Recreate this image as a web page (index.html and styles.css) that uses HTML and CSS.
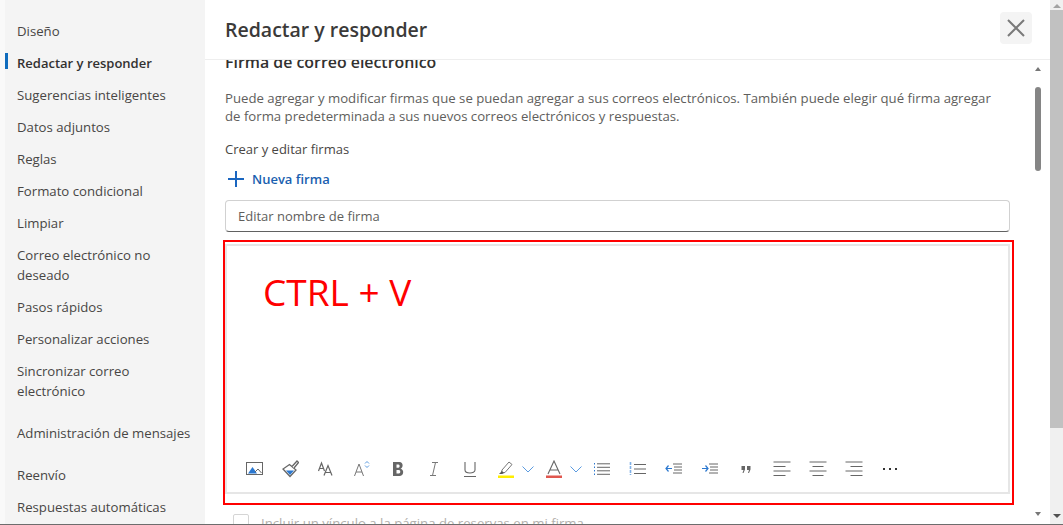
FILE: index.html
```html
<!DOCTYPE html>
<html lang="es">
<head>
<meta charset="utf-8">
<title>Redactar y responder</title>
<link rel="stylesheet" href="styles.css">
</head>
<body>
<div class="app">
  <nav class="side">
    <a class="item">Diseño</a>
    <a class="item active">Redactar y responder</a>
    <a class="item">Sugerencias inteligentes</a>
    <a class="item">Datos adjuntos</a>
    <a class="item">Reglas</a>
    <a class="item">Formato condicional</a>
    <a class="item">Limpiar</a>
    <a class="item">Correo electrónico no deseado</a>
    <a class="item">Pasos rápidos</a>
    <a class="item">Personalizar acciones</a>
    <a class="item">Sincronizar correo electrónico</a>
    <a class="item spaced">Administración de mensajes</a>
    <a class="item spaced">Reenvío</a>
    <a class="item">Respuestas automáticas</a>
  </nav>
  <main class="main">
    <header class="head">
      <h1 class="title">Redactar y responder</h1>
      <button class="close" aria-label="Cerrar">
        <svg width="18" height="18" viewBox="0 0 18 18"><path d="M1 1L17 17M17 1L1 17" stroke="#7a7a7a" stroke-width="2" fill="none"/></svg>
      </button>
    </header>
    <div class="body">
      <div class="content">
        <h2 class="section">Firma de correo electrónico</h2>
        <p class="desc">Puede agregar y modificar firmas que se puedan agregar a sus correos electrónicos. También puede elegir qué firma agregar de forma predeterminada a sus nuevos correos electrónicos y respuestas.</p>
        <p class="label">Crear y editar firmas</p>
        <div class="new">
          <svg width="18" height="18" viewBox="0 0 18 18"><path d="M9 1V17M1 9H17" stroke="#1a66c0" stroke-width="2" fill="none"/></svg>
          <span>Nueva firma</span>
        </div>
        <div class="name">Editar nombre de firma</div>
        <div class="redbox">
          <div class="editor">
            <div class="typed">CTRL + V</div>
            <div class="toolbar">
              <svg class="ic" viewBox="0 0 18 18"><rect x="1.500" y="2.500" width="16" height="12" fill="#fff" stroke="#666"/><path d="M3 13.500L7.500 7L12 13.500Z" fill="#2b78d0"/><path d="M10 12L13 9L16.500 13" fill="none" stroke="#666"/></svg>
              <svg class="ic" viewBox="0 0 18 18"><path d="M2 9L9 16.500L15 10L8.500 4.500Z" fill="#fff" stroke="#666" stroke-width="1.300"/><path d="M5 10.500L13 10.500L9 15Z" fill="#2b78d0"/><path d="M11 6.500L16 1L17.500 2.500L13 8" fill="#fff" stroke="#666" stroke-width="1.300"/></svg>
              <svg class="ic" viewBox="0 0 18 18"><path d="M1.500 11L4.500 3L7.500 11M2.500 8.500H6.500M7 15.500L11 5.500L15 15.500M8.200 12.500H13.800" fill="none" stroke="#666" stroke-width="1.200"/></svg>
              <svg class="ic" viewBox="0 0 18 18"><path d="M1.500 16L6 4L10.500 16M3 12H9" fill="none" stroke="#777" stroke-width="1"/><path d="M12 3.500L14 1.500L16 3.500M12 5.500L14 7.500L16 5.500" fill="none" stroke="#5b9be0" stroke-width="1"/></svg>
              <svg class="ic" viewBox="0 0 18 18"><path d="M4 2H10.500C14.500 2 14.500 8 11.500 8.700C15.500 9.300 15 16 10.500 16H4ZM7.500 4.500V7.700H9.500C11 7.700 11 4.500 9.500 4.500ZM7.500 10V13.500H10C11.700 13.500 11.700 10 10 10Z" fill="#666" fill-rule="evenodd"/></svg>
              <svg class="ic" viewBox="0 0 18 18"><path d="M7 2.500H13M5 15.500H11M10.500 2.500L7.500 15.500" fill="none" stroke="#777" stroke-width="1"/></svg>
              <svg class="ic" viewBox="0 0 18 18"><path d="M4 2V10C4 14 14 14 14 10V2M3 16.500H15" fill="none" stroke="#666" stroke-width="1.100"/></svg>
              <span class="pair">
                <svg class="ic" viewBox="0 0 18 18"><path d="M5 10L12 2L15 4.500L8 12.500L4.500 13Z" fill="#fff" stroke="#777"/><path d="M2 14L5 11L7 13L5 14Z" fill="#555"/><rect x="1" y="15.500" width="16" height="2.500" fill="#ffee00"/></svg>
                <svg class="chev" viewBox="0 0 12 7"><path d="M0.500 0.500L6 6L11.500 0.500" fill="none" stroke="#5b9be0"/></svg>
              </span>
              <span class="pair">
                <svg class="ic" viewBox="0 0 18 18"><path d="M3 14L9 1L15 14M5 10H13" fill="none" stroke="#666" stroke-width="1.100"/><rect x="1" y="15.500" width="16" height="2.500" fill="#e0574f"/></svg>
                <svg class="chev" viewBox="0 0 12 7"><path d="M0.500 0.500L6 6L11.500 0.500" fill="none" stroke="#5b9be0"/></svg>
              </span>
              <svg class="ic" viewBox="0 0 18 18"><path d="M4 4.500H17M4 8H17M4 11.500H17M4 15H17" transform="translate(0 -.7)" stroke="#666" fill="none"/><path d="M1.500 3V15" stroke="#2b78d0" stroke-dasharray="1.500 2" fill="none"/></svg>
              <svg class="ic" viewBox="0 0 18 18"><path d="M5 4.500H17M5 9H17M5 13.500H17" stroke="#666" fill="none"/><path d="M1.500 2V15" stroke="#7fb0e6" stroke-width="1.600" stroke-dasharray="3 1" fill="none"/></svg>
              <svg class="ic" viewBox="0 0 18 18"><path d="M8 4H17M9 7H17M9 10H17M8 13H17" stroke="#666" fill="none"/><path d="M1 8.500H7M3.500 5.500L1 8.500L3.500 11.500" stroke="#2b78d0" stroke-width="1.200" fill="none"/></svg>
              <svg class="ic" viewBox="0 0 18 18"><path d="M8 4H17M9 7H17M9 10H17M8 13H17" stroke="#666" fill="none"/><path d="M1 8.500H7M4.500 5.500L7 8.500L4.500 11.500" stroke="#2b78d0" stroke-width="1.200" fill="none"/></svg>
              <svg class="ic" viewBox="0 0 18 18"><path d="M4.500 6H8V9.500L6.500 13H5.500L6.500 10H4.500ZM10 6H13.500V9.500L12 13H11L12 10H10Z" fill="#666"/></svg>
              <svg class="ic" viewBox="0 0 18 18"><path d="M0.500 2H17.500M0.500 6.500H12.500M0.500 11H17.500M0.500 15.500H12.500" stroke="#666" fill="none"/></svg>
              <svg class="ic" viewBox="0 0 18 18"><path d="M0.500 2H17.500M3.500 6.500H14.500M0.500 11H17.500M3.500 15.500H14.500" stroke="#666" fill="none"/></svg>
              <svg class="ic" viewBox="0 0 18 18"><path d="M0.500 2H17.500M5.500 6.500H17.500M0.500 11H17.500M5.500 15.500H17.500" stroke="#666" fill="none"/></svg>
              <svg class="ic" viewBox="0 0 18 18"><path d="M2 9H4M8 9H10M14 9H16" stroke="#333" stroke-width="2" fill="none"/></svg>
            </div>
          </div>
        </div>
        <label class="check"><span class="box"></span><span>Incluir un vínculo a la página de reservas en mi firma</span></label>
      </div>
      <div class="inner-bar">
        <span class="mini-up"></span>
        <span class="mini-thumb"></span>
        <span class="mini-down"></span>
      </div>
    </div>
  </main>
  <div class="page-bar">
    <span class="up"></span>
    <span class="thumb"></span>
    <span class="down"></span>
  </div>
</div>
</body>
</html>
```
FILE: styles.css
```css
* { box-sizing: border-box; }
html, body { margin: 0; height: 100%; overflow: hidden; }
body { font-family: "Open Sans", "Noto Sans", Arial, sans-serif; color: #323130; background: #fff; }
.app { display: flex; height: 525px; border-bottom: 1px solid #6d6d6d; }

.side { width: 205px; flex: none; background: #f4f4f4; border-left: 5px solid #f9f9f9; padding: 15px 0 0; display: flex; flex-direction: column; overflow: hidden; }
.item { display: block; padding: 6px 12px; font-size: 13.200px; line-height: 20px; color: #484644; }
.item.active { color: #323130; font-size: 13px; font-weight: 600; position: relative; }
.item.active::before { content: ""; position: absolute; left: 0; top: 6px; width: 3px; height: 16px; background: #0f6cbd; }
.item.spaced { margin-top: 10px; }

.main { flex: 1; min-width: 0; display: flex; flex-direction: column; background: #fff; }
.head { height: 60px; flex: none; border-bottom: 1px solid #eeeeee; padding: 0 18px 0 20px; display: flex; align-items: center; justify-content: space-between; background: #fff; position: relative; z-index: 1; }
.title { margin: 0; font-size: 19.500px; font-weight: 600; color: #3b3a39; }
.close { width: 32px; height: 32px; padding: 0; border: 0; border-radius: 4px; background: #f4f4f4; display: flex; align-items: center; justify-content: center; margin-top: -4px; }

.body { flex: 1; min-height: 0; display: flex; overflow: hidden; }
.content { width: 831px; flex: none; padding: 0 0 0 17px; margin-top: -8px; }
.section { margin: 0 0 0 3px; font-size: 15.900px; line-height: 20px; font-weight: 600; color: #323130; }
.desc { margin: 17px 0 0 3px; width: 775px; font-size: 13.200px; line-height: 18px; color: #605e5c; }
.label { margin: 14px 0 0 3px; font-size: 13px; line-height: 20px; color: #484644; }
.new { margin: 10px 0 0 5px; height: 20px; display: flex; align-items: center; gap: 7px; font-size: 13px; font-weight: 600; color: #1a5fb0; }
.name { margin: 11px 0 0 3px; width: 785px; height: 32px; padding: 0 12px; font-size: 13px; line-height: 30px; color: #605e5c; border: 1px solid #d1d1d1; border-bottom-color: #616161; border-radius: 4px; }
.redbox { margin: 8px 0 0 1px; width: 791px; height: 265px; border: 2px solid #f00; padding: 2px 2px 9px 0; }
.editor { height: 100%; border: 2px solid #e6e6e6; display: flex; flex-direction: column; justify-content: space-between; padding: 0 0 14px 18px; }
.typed { margin: 23px 0 0 18px; font-family: "Open Sans", sans-serif; font-size: 37px; line-height: 46px; color: #f00; }
.toolbar { display: flex; align-items: center; gap: 18px; height: 18px; }
.ic { width: 18px; height: 18px; flex: none; display: block; }
.pair { display: flex; align-items: center; gap: 7px; margin-right: -7px; }
.chev { width: 12px; height: 7px; flex: none; display: block; }
.check { margin: 8px 0 0 11px; display: flex; align-items: flex-start; gap: 12px; font-size: 13.200px; line-height: 20px; color: #b3b0ad; }
.box { width: 16px; height: 16px; border: 1px solid #d5d5d5; border-radius: 2px; flex: none; margin-top: 1px; }

.inner-bar { width: 8px; margin-left: -2px; display: flex; flex-direction: column; align-items: center; position: relative; height: 464px; }
.mini-up { margin-top: 7px; border: 3px solid transparent; border-top: 0; border-bottom: 4px solid #777; width: 0; height: 0; }
.mini-thumb { margin-top: 16px; width: 6px; height: 84px; border-radius: 3px; background: #858585; }
.mini-down { margin-top: auto; margin-bottom: 8px; border: 3px solid transparent; border-bottom: 0; border-top: 4px solid #777; width: 0; height: 0; }

.page-bar { width: 13px; flex: none; background: #f0f0f0; display: flex; flex-direction: column; align-items: center; }
.up { margin-top: 4px; border: 4px solid transparent; border-top: 0; border-bottom: 4px solid #a3a3a3; width: 0; height: 0; }
.thumb { margin-top: 2px; width: 13px; height: 418px; background: #c1c1c1; }
.down { margin-top: auto; margin-bottom: 6px; border: 4px solid transparent; border-bottom: 0; border-top: 4px solid #505050; width: 0; height: 0; }
```
